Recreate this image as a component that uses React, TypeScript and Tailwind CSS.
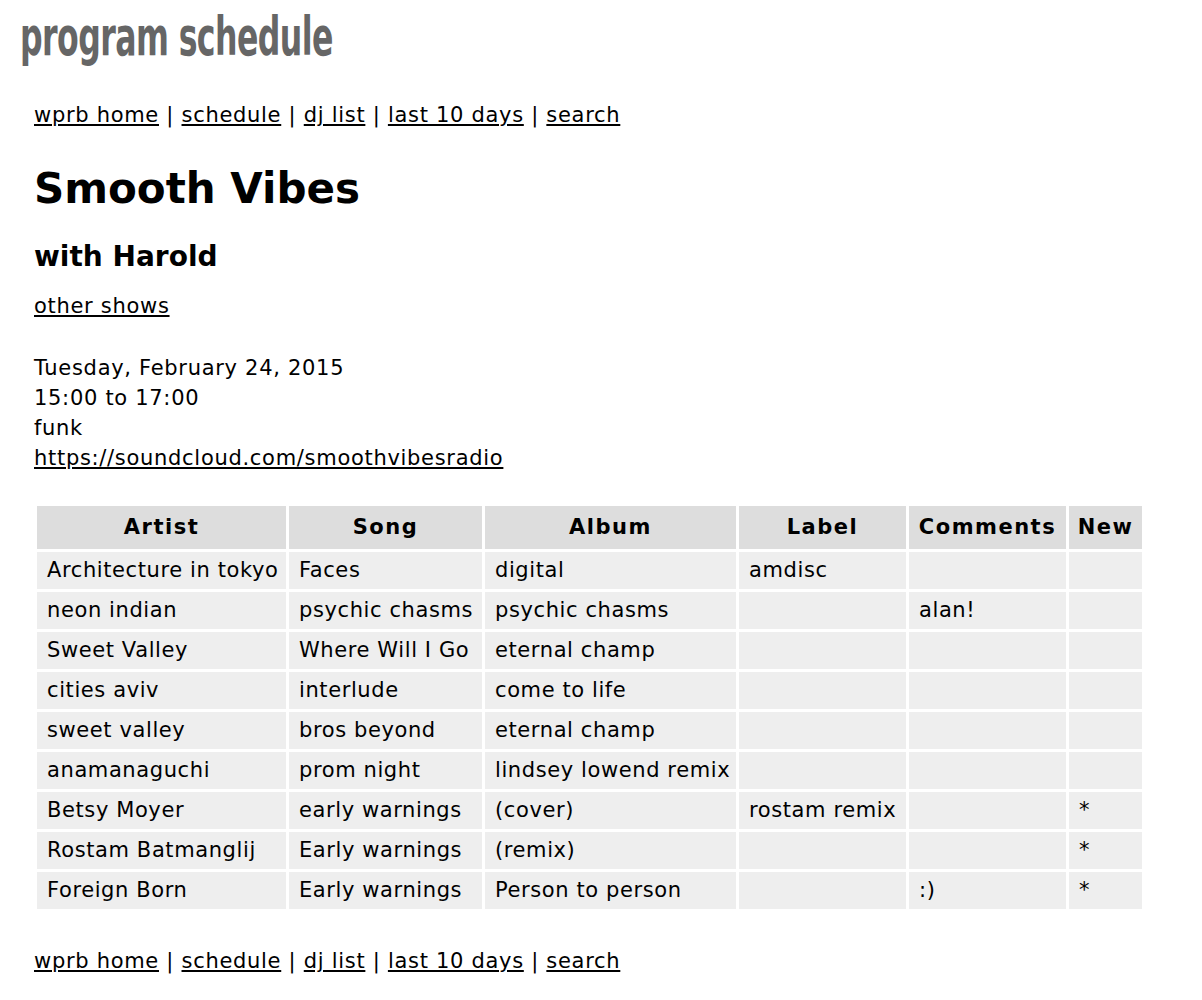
import React from "react";

const rows = [
  ["Architecture in tokyo", "Faces", "digital", "amdisc", "", ""],
  ["neon indian", "psychic chasms", "psychic chasms", "", "alan!", ""],
  ["Sweet Valley", "Where Will I Go", "eternal champ", "", "", ""],
  ["cities aviv", "interlude", "come to life", "", "", ""],
  ["sweet valley", "bros beyond", "eternal champ", "", "", ""],
  ["anamanaguchi", "prom night", "lindsey lowend remix", "", "", ""],
  ["Betsy Moyer", "early warnings", "(cover)", "rostam remix", "", "*"],
  ["Rostam Batmanglij", "Early warnings", "(remix)", "", "", "*"],
  ["Foreign Born", "Early warnings", "Person to person", "", ":)", "*"],
];

const cols = [
  { name: "Artist", w: "w-[249px]" },
  { name: "Song", w: "w-[193px]" },
  { name: "Album", w: "w-[251px]" },
  { name: "Label", w: "w-[167px]" },
  { name: "Comments", w: "w-[157px]" },
  { name: "New", w: "w-[73px]" },
];

function NavLinks() {
  const links = ["wprb home", "schedule", "dj list", "last 10 days", "search"];
  return (
    <p className="leading-[30px]">
      {links.map((l, i) => (
        <span key={l}>
          <a href="#" className="underline underline-offset-2">{l}</a>
          {i < links.length - 1 && " | "}
        </span>
      ))}
    </p>
  );
}

export default function App() {
  return (
    <div className="min-h-screen bg-white text-black font-['DejaVu_Sans',Verdana,sans-serif] text-[21px] tracking-[0.7px]">
      <div className="pl-[20px] pt-[4px]">
        <h1 className="origin-left scale-x-[0.585] whitespace-nowrap font-['DejaVu_Sans',sans-serif] font-bold text-[#666] text-[54px] leading-[66px] tracking-[-1px]">
          program schedule
        </h1>
      </div>

      <div className="px-[34px]">
        <div className="mt-[30px]">
          <NavLinks />
        </div>

        <h2 className="mt-[35px] text-[42px] font-bold leading-[48px] tracking-normal">Smooth Vibes</h2>
        <h3 className="mt-[26px] text-[28px] font-bold leading-[36px] tracking-normal">with Harold</h3>
        <p className="mt-[16px] leading-[30px]">
          <a href="#" className="underline underline-offset-2">other shows</a>
        </p>

        <div className="mt-[32px] leading-[30px]">
          <div>Tuesday, February 24, 2015</div>
          <div>15:00 to 17:00</div>
          <div>funk</div>
          <div>
            <a href="#" className="underline underline-offset-2">https://soundcloud.com/smoothvibesradio</a>
          </div>
        </div>

        <table className="mt-[30px] w-[1111px] table-fixed border-separate border-spacing-[3px]">
          <thead>
            <tr>
              {cols.map((c) => (
                <th key={c.name} className={`${c.w} bg-[#dddddd] h-[43px] px-0 text-center font-bold tracking-[1.5px]`}>
                  {c.name}
                </th>
              ))}
            </tr>
          </thead>
          <tbody>
            {rows.map((r, i) => (
              <tr key={i}>
                {r.map((cell, j) => (
                  <td key={j} className="bg-[#eeeeee] h-[37px] px-[10px] text-left whitespace-nowrap tracking-[0.6px]">
                    {cell}
                  </td>
                ))}
              </tr>
            ))}
          </tbody>
        </table>

        <div className="mt-[34px]">
          <NavLinks />
        </div>
      </div>
    </div>
  );
}
